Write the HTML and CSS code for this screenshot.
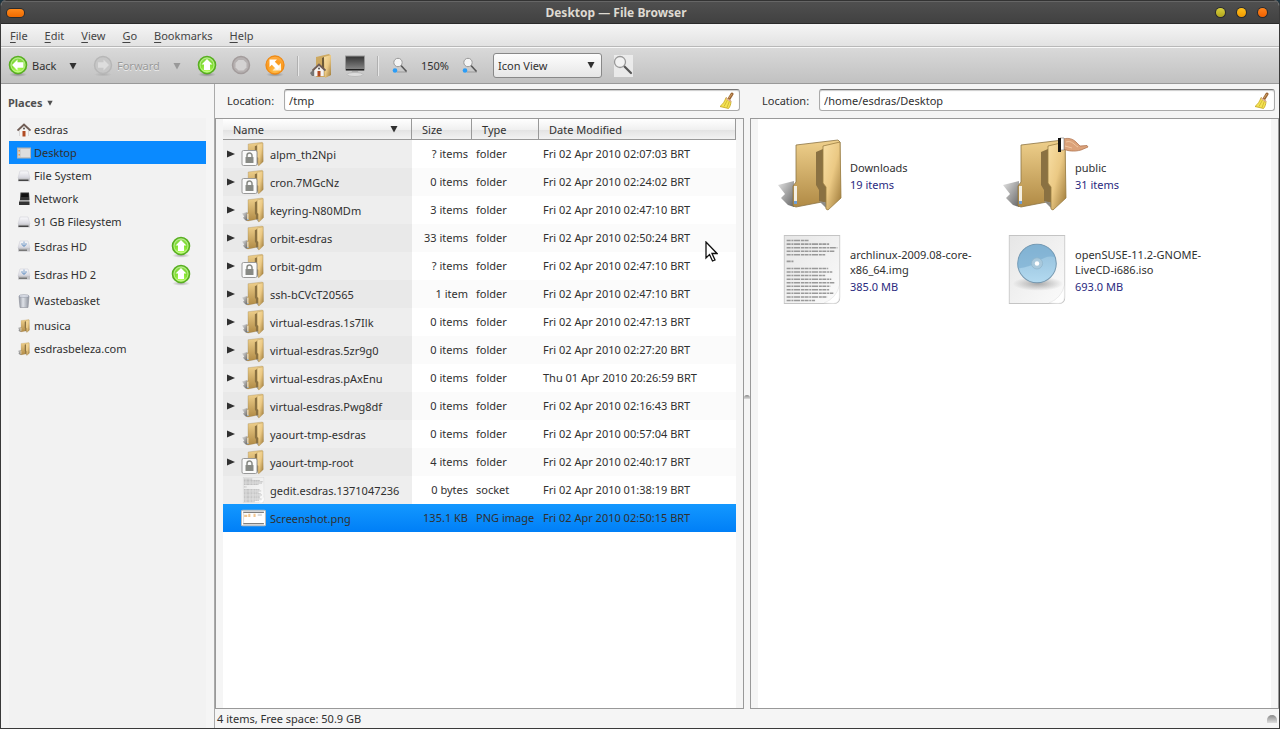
FILE: index.html
```html
<!DOCTYPE html>
<html lang="en">
<head>
<meta charset="utf-8">
<title>Desktop — File Browser</title>
<link rel="stylesheet" href="styles.css">
</head>
<body>
<svg class="sprites" aria-hidden="true">
  <defs>
    <linearGradient id="g-back" x1="0" y1="0" x2="0" y2="1"><stop offset="0" stop-color="#efd08c"/><stop offset="1" stop-color="#b08a45"/></linearGradient>
    <linearGradient id="g-flap" x1="0" y1="0" x2="1" y2="1"><stop offset="0" stop-color="#f9e0a6"/><stop offset=".5" stop-color="#ebc984"/><stop offset="1" stop-color="#9a7636"/></linearGradient>
    <linearGradient id="g-shade" x1="0" y1="0" x2="1" y2="1"><stop offset="0" stop-color="#e4e4e4"/><stop offset="1" stop-color="#666"/></linearGradient>
    <radialGradient id="g-green" cx=".5" cy=".85" r=".8"><stop offset="0" stop-color="#b4ff5c"/><stop offset=".6" stop-color="#7ddc2c"/><stop offset="1" stop-color="#8fd95a"/></radialGradient>
    <radialGradient id="g-orange" cx=".5" cy=".8" r=".8"><stop offset="0" stop-color="#ffc04d"/><stop offset=".6" stop-color="#fb9a1e"/><stop offset="1" stop-color="#ffb04a"/></radialGradient>
    <linearGradient id="g-page" x1="0" y1="0" x2="1" y2="1"><stop offset="0" stop-color="#e6e6e6"/><stop offset="1" stop-color="#fbfbfb"/></linearGradient>
    <linearGradient id="g-disc" x1="0" y1="0" x2="0" y2="1"><stop offset="0" stop-color="#8fbbd8"/><stop offset="1" stop-color="#b3daf0"/></linearGradient>
    <linearGradient id="g-screen" x1="0" y1="0" x2="0" y2="1"><stop offset="0" stop-color="#333"/><stop offset="1" stop-color="#8a8a8a"/></linearGradient>
    <linearGradient id="g-drive" x1="0" y1="0" x2="0" y2="1"><stop offset="0" stop-color="#fafafc"/><stop offset="1" stop-color="#d5d5dd"/></linearGradient>
    <linearGradient id="g-can" x1="0" y1="0" x2="1" y2="0"><stop offset="0" stop-color="#8d929c"/><stop offset=".4" stop-color="#dfe2e8"/><stop offset="1" stop-color="#8d929c"/></linearGradient>
    <radialGradient id="g-soft"><stop offset="0" stop-color="#000" stop-opacity=".3"/><stop offset="1" stop-color="#000" stop-opacity="0"/></radialGradient>
  </defs>
  <symbol id="folder" viewBox="0 0 72 76">
    <path fill="url(#g-shade)" d="M2 48 18 44V70L12 68 5 61 9 57Z"/>
    <path fill="url(#g-back)" stroke="#8b7344" stroke-width=".8" d="M20 8 62 3 64 5V60L51 64 20 70 17 69V49L20 45Z"/>
    <path fill="#8a7142" d="M40 15 47 12V46L50 50V66L43 64V53L40 48Z"/>
    <path fill="#8c8b88" d="M43 64 52 66V73Z"/>
    <path fill="url(#g-flap)" stroke="#9b7d42" stroke-width=".8" d="M47 9 64 5 65 61 52 73 50 72V50L47 46Z"/>
    <path fill="#f4efe2" d="M18 49h3v18h-3z"/><path fill="#6e9fd8" d="M18 64h3v3h-3z"/>
  </symbol>
  <symbol id="hand" viewBox="0 0 32 17">
    <path fill="#dba27a" stroke="#a96a44" stroke-width=".7" d="M6 2C12 .5 16 2 19 5L23 9 30 8.500 31 10 24 13C17 15 11 14 6 12Z"/>
    <path fill="none" stroke="#f0c6a0" d="M9 5C15 3 17 8 21 10M8 9 15 11"/>
    <path fill="#fff" stroke="#777" stroke-width=".6" d="M3 1h4v12H3z"/><path fill="#111" d="M1 1h3v14H1z"/>
  </symbol>
  <symbol id="folder-locked" viewBox="0 0 24 26">
    <use href="#folder" x="0" y="0" width="24" height="26"/>
    <rect x=".5" y="9.500" width="15" height="15" rx="1.500" fill="#fafafa" stroke="#999"/>
    <rect x="4" y="16" width="8" height="6" rx=".5" fill="#888a85"/>
    <path fill="none" stroke="#888a85" stroke-width="1.500" d="M5.500 16v-1.500a2.500 2.500 0 0 1 5 0v1.500"/>
  </symbol>
  <symbol id="page" viewBox="0 0 56 68">
    <path fill="url(#g-page)" stroke="#c4c4c4" d="M.5.500h55V61q0 6-6 6.500H.500Z"/>
    <path fill="#fff" stroke="#ddd" stroke-width=".5" d="M40 67Q52 62 55 50v11q0 6-6 6.500Z"/>
  </symbol>
  <symbol id="text-doc" viewBox="0 0 56 68">
    <use href="#page" width="56" height="68"/>
    <g stroke="#999" stroke-width="1.500" fill="none" stroke-dasharray="4 .7 2 .6 6 .8 3 .5">
      <path d="M3 5.500h22"/><path d="M3 9h42"/><path d="M3 12.500h50"/><path d="M3 16h47"/><path d="M3 19.500h38"/><path d="M3 26h7"/><path d="M3 33h41"/><path d="M3 36.500h45"/><path d="M3 40h38"/><path d="M3 43.500h44"/><path d="M3 47h47"/><path d="M3 50.500h43"/><path d="M3 54h42"/><path d="M3 57.500h46"/><path d="M3 61h40"/><path d="M3 64.500h28"/>
    </g>
  </symbol>
  <symbol id="disc-doc" viewBox="0 0 56 68">
    <use href="#page" width="56" height="68"/>
    <ellipse cx="29" cy="48" rx="25" ry="7" fill="url(#g-soft)"/>
    <circle cx="28" cy="28" r="19" fill="url(#g-disc)" stroke="#7598b0"/>
    <path fill="#75a9cd" d="M9 33Q22 31 28 27 38 19 46 22A19 19 0 0 0 11 20Q8 26 9 33Z" opacity=".55"/>
    <circle cx="28" cy="28" r="5.500" fill="#a9c9dc" stroke="#8fb4cb" stroke-width=".7"/><circle cx="28" cy="28" r="2.200" fill="#fff"/>
  </symbol>
  <symbol id="ring-green" viewBox="0 0 20 22">
    <ellipse cx="10" cy="19.500" rx="9" ry="2.300" fill="url(#g-soft)"/>
    <circle cx="10" cy="10" r="8.500" fill="url(#g-green)" stroke="#58ae22" stroke-width="1.600"/>
    <circle cx="10" cy="10" r="7" fill="none" stroke="#d5f8b0" stroke-width=".7"/>
  </symbol>
  <symbol id="up" viewBox="0 0 20 22"><use href="#ring-green" width="20" height="22"/><path fill="#fff" d="M10 4 15.500 9.500H13V15H7V9.500H4.500Z"/></symbol>
  <symbol id="back" viewBox="0 0 20 22"><use href="#ring-green" width="20" height="22"/><path fill="#fff" d="M4 10 9.500 4.500V7.200H15.500V12.800H9.500V15.500Z"/></symbol>
  <symbol id="forward" viewBox="0 0 20 22"><ellipse cx="10" cy="19.500" rx="9" ry="2" fill="url(#g-soft)" opacity=".4"/><circle cx="10" cy="10" r="8.500" fill="#c7c7c7" stroke="#b7b7b7" stroke-width="1.500"/><path fill="#ddd" d="M16 10 10.500 4.500V7.200H5V12.800H10.500V15.500Z"/></symbol>
  <symbol id="stop" viewBox="0 0 20 22"><circle cx="10" cy="10" r="8.500" fill="#b6b1b1" stroke="#a39c9c" stroke-width="1.500"/><path fill="#d4d2d2" d="m7.500 5h5L15.500 8v4.500L12.500 15.500h-5L4.500 12.500V8Z"/></symbol>
  <symbol id="reload" viewBox="0 0 20 22"><ellipse cx="10" cy="19.500" rx="9" ry="2.300" fill="url(#g-soft)"/><circle cx="10" cy="10" r="9" fill="url(#g-orange)" stroke="#ef8b16" stroke-width="1.300"/><path fill="#fff0d4" d="M16 8v7.500H7.500L10 13 13.500 10.500Z"/><path fill="#fff" d="M4.500 4.500H12L9.800 6.800 15 12 12 15 6.800 9.800 4.500 12Z"/></symbol>
  <symbol id="house" viewBox="0 0 14 14"><path fill="#bbb" d="M2 7 7 2l5 5v6H2Z"/><path fill="#f7f4f1" d="M2.500 7 7 3l4.500 4v6H2.500Z"/><path fill="none" stroke="#705d55" stroke-width="1.800" d="M.5 7.500 7 1.500l6.500 6"/><path fill="#b14b23" d="M5.500 8h3v5.500h-3z"/><circle cx="7" cy="5.500" r="1" fill="#555"/></symbol>
  <symbol id="home-folder" viewBox="0 0 22 24"><path fill="#cda961" d="M6 3 19 0l2 2v19l-6 2H6Z"/><path fill="url(#g-flap)" d="M14 3 21 1v20l-6 3Z"/><path fill="#6d5a38" d="m12 4 2-1v14h-2z"/><path fill="#777" d="m0 19 5-5v8H2z"/><use href="#house" x="2" y="9" width="14" height="14"/></symbol>
  <symbol id="computer" viewBox="0 0 22 24"><rect x="1.500" y="2" width="19" height="14" fill="url(#g-screen)" stroke="#999"/><path fill="#222" d="M2 15h18v1.500H2z"/><path fill="#aaa" d="M8 17h6l1 3H7z"/><ellipse cx="11" cy="20.500" rx="8" ry="2" fill="#ddd" stroke="#bbb"/></symbol>
  <symbol id="glass" viewBox="0 0 22 24"><path fill="#f1f1f1" d="M2 1h19v22H2z" opacity=".8"/><path stroke="#555" stroke-width="2.200" stroke-linecap="round" d="m12 12 7 7"/><circle cx="8" cy="8" r="5.500" fill="#f2f2f2" stroke="#999" stroke-width="1.300"/></symbol>
  <symbol id="zoom-glass" viewBox="0 0 16 16"><path stroke="#999" d="M5 14.500h10"/><path stroke="#555" stroke-width="1.600" d="m9 8 5.500 6"/><circle cx="6" cy="5" r="4.200" fill="#f4f4f4" stroke="#999"/><circle cx="3" cy="13" r="2.300" fill="#2b9cf5"/></symbol>
  <symbol id="broom" viewBox="0 0 16 17"><path stroke="#9b6634" stroke-width="3" stroke-linecap="round" d="m13 2-3 5"/><path stroke="#d3a56c" d="m13 2-3 4"/><path fill="#f4e353" stroke="#c4a51b" stroke-width=".8" d="M7 5.500 12 9C12 12 11 15 9.500 16.500L1 14.500C4 12 6 9 7 5.500Z"/><path stroke="#bda020" stroke-width=".6" d="M8.500 8 5 14.500M10.500 9 8 15.500"/><path stroke="#dba9a0" stroke-width="1.500" d="m7 6 5 3.500"/></symbol>
  <symbol id="desk" viewBox="0 0 14 14"><rect x=".5" y="2" width="13" height="10" fill="#cfcfcf" stroke="#b3b3b3"/><path fill="#eb9e49" d="M1.500 4H3v1.500H1.500zM1.500 8H3v1.500H1.500z"/><path fill="#dedede" d="M4 3h9v8H4z"/></symbol>
  <symbol id="drive" viewBox="0 0 14 14"><path fill="url(#g-drive)" stroke="#d0d0d6" stroke-width=".6" d="M3 2h8l2 7H1Z"/><path fill="#c9c9cd" d="M1 9h12v3.500H1z"/><path fill="#444" d="M1.500 10.500h10V12h-10z"/></symbol>
  <symbol id="usb" viewBox="0 0 14 14"><path fill="url(#g-drive)" stroke="#cfcfd6" stroke-width=".6" d="M3 2h8l2 7H1Z"/><path fill="#c2c2c6" d="M1 9h12v3.500H1z"/><path fill="#777" d="M2 10.500h8V12H2z"/><path fill="none" stroke="#6b95c5" stroke-width=".8" d="M7 2.500V8M5 4v2l2 1 2-1V4"/></symbol>
  <symbol id="network" viewBox="0 0 14 14"><path fill="#333" d="M3.500.500H12L12.500 8H3z"/><path fill="#111" d="M4.500 1.500H11L11.500 5H4z"/><path fill="#aaa" d="M2.500 8h10L12 9.500H2.500z"/><path fill="#333" d="M2 9.500h10.500V13H2z"/></symbol>
  <symbol id="waste" viewBox="0 0 14 14"><path fill="url(#g-can)" stroke="#8b8f99" stroke-width=".6" d="M2 2h10l-1 11.500H3z"/><ellipse cx="7" cy="2" rx="5" ry="1.300" fill="#e3e6ee" stroke="#8990a0" stroke-width=".6"/></symbol>
  <symbol id="thumb" viewBox="0 0 24 16"><rect x=".5" y=".5" width="23" height="15" rx="1" fill="#fff" stroke="#bbb"/><path fill="#555" d="M2 2h20v1H2zM2 13h20v1H2z"/><path fill="#f2c690" d="M3 5h3v2H3zM7 4h2v3H7zM12 4h2v3h-2z"/><path fill="#ddd" d="M2 3h1v10H2zM16 4h4v2h-4z"/></symbol>
  <symbol id="down-arrow" viewBox="0 0 8 8"><path fill="currentColor" d="M.5 1h7L4 7.500Z"/></symbol>
  <symbol id="right-arrow" viewBox="0 0 8 8"><path fill="currentColor" d="M0 .5 8 4 0 7.500Z"/></symbol>
</svg>

<div class="window">
  <header class="titlebar">
    <button class="pill" aria-label="Window menu"></button>
    <h1>Desktop — File Browser</h1>
    <div class="controls">
      <button class="dot olive" aria-label="Minimize"></button>
      <button class="dot amber" aria-label="Maximize"></button>
      <button class="dot orange" aria-label="Close"></button>
    </div>
  </header>

  <nav class="menubar">
    <button><u>F</u>ile</button><button><u>E</u>dit</button><button><u>V</u>iew</button><button><u>G</u>o</button><button><u>B</u>ookmarks</button><button><u>H</u>elp</button>
  </nav>

  <div class="toolbar">
    <button class="nav-back"><svg class="i20"><use href="#back"/></svg>Back</button>
    <button class="drop" aria-label="Back history"><svg class="i8"><use href="#down-arrow"/></svg></button>
    <button class="nav-forward" disabled><svg class="i20"><use href="#forward"/></svg>Forward</button>
    <button class="drop off" aria-label="Forward history" disabled><svg class="i8"><use href="#down-arrow"/></svg></button>
    <button class="tool lead" aria-label="Up"><svg class="i20"><use href="#up"/></svg></button>
    <button class="tool" aria-label="Stop" disabled><svg class="i20"><use href="#stop"/></svg></button>
    <button class="tool" aria-label="Reload"><svg class="i20"><use href="#reload"/></svg></button>
    <span class="sep"></span>
    <button class="tool" aria-label="Home"><svg class="i24"><use href="#home-folder"/></svg></button>
    <button class="tool" aria-label="Computer"><svg class="i24"><use href="#computer"/></svg></button>
    <span class="sep"></span>
    <button class="zoom" aria-label="Zoom out"><svg class="i16"><use href="#zoom-glass"/></svg></button>
    <span class="level">150%</span>
    <button class="zoom" aria-label="Zoom in"><svg class="i16"><use href="#zoom-glass"/></svg></button>
    <div class="view"><select aria-label="View"><option>Icon View</option><option>List View</option></select><svg class="i8"><use href="#down-arrow"/></svg></div>
    <button class="tool search" aria-label="Search"><svg class="i24"><use href="#glass"/></svg></button>
  </div>

  <div class="body">
    <aside class="sidebar">
      <button class="places">Places <svg class="i6"><use href="#down-arrow"/></svg></button>
      <ul>
        <li><a href="#"><svg class="i14"><use href="#house"/></svg>esdras</a></li>
        <li class="current"><a href="#"><svg class="i14"><use href="#desk"/></svg>Desktop</a></li>
        <li><a href="#"><svg class="i14"><use href="#drive"/></svg>File System</a></li>
        <li><a href="#"><svg class="i14"><use href="#network"/></svg>Network</a></li>
        <li><a href="#"><svg class="i14"><use href="#drive"/></svg>91 GB Filesystem</a></li>
        <li class="mount"><a href="#"><svg class="i14"><use href="#usb"/></svg>Esdras HD</a><button aria-label="Eject Esdras HD"><svg class="i20"><use href="#up"/></svg></button></li>
        <li class="mount"><a href="#"><svg class="i14"><use href="#usb"/></svg>Esdras HD 2</a><button aria-label="Eject Esdras HD 2"><svg class="i20"><use href="#up"/></svg></button></li>
        <li class="trash"><a href="#"><svg class="i14"><use href="#waste"/></svg>Wastebasket</a></li>
        <li><a href="#"><svg class="i14"><use href="#folder"/></svg>musica</a></li>
        <li><a href="#"><svg class="i14"><use href="#folder"/></svg>esdrasbeleza.com</a></li>
      </ul>
    </aside>

    <div class="content">
      <main class="panes">
        <section class="pane">
          <div class="location"><label for="loc1">Location:</label><div class="field"><input id="loc1" type="text" value="/tmp"><button aria-label="Clear location"><svg class="i16"><use href="#broom"/></svg></button></div></div>
          <div class="frame">
            <div class="view-area">
              <table>
                <colgroup><col class="c-name"><col class="c-size"><col class="c-type"><col></colgroup>
                <thead><tr><th><button>Name<svg class="i8"><use href="#down-arrow"/></svg></button></th><th><button>Size</button></th><th><button>Type</button></th><th><button>Date Modified</button></th></tr></thead>
                <tbody>
                  <tr><td><div class="name"><button aria-label="Expand"><svg class="i8"><use href="#right-arrow"/></svg></button><svg class="file"><use href="#folder-locked"/></svg>alpm_th2Npi</div></td><td>? items</td><td>folder</td><td>Fri 02 Apr 2010 02:07:03 BRT</td></tr>
                  <tr><td><div class="name"><button aria-label="Expand"><svg class="i8"><use href="#right-arrow"/></svg></button><svg class="file"><use href="#folder-locked"/></svg>cron.7MGcNz</div></td><td>0 items</td><td>folder</td><td>Fri 02 Apr 2010 02:24:02 BRT</td></tr>
                  <tr><td><div class="name"><button aria-label="Expand"><svg class="i8"><use href="#right-arrow"/></svg></button><svg class="file"><use href="#folder"/></svg>keyring-N80MDm</div></td><td>3 items</td><td>folder</td><td>Fri 02 Apr 2010 02:47:10 BRT</td></tr>
                  <tr><td><div class="name"><button aria-label="Expand"><svg class="i8"><use href="#right-arrow"/></svg></button><svg class="file"><use href="#folder"/></svg>orbit-esdras</div></td><td>33 items</td><td>folder</td><td>Fri 02 Apr 2010 02:50:24 BRT</td></tr>
                  <tr><td><div class="name"><button aria-label="Expand"><svg class="i8"><use href="#right-arrow"/></svg></button><svg class="file"><use href="#folder-locked"/></svg>orbit-gdm</div></td><td>? items</td><td>folder</td><td>Fri 02 Apr 2010 02:47:10 BRT</td></tr>
                  <tr><td><div class="name"><button aria-label="Expand"><svg class="i8"><use href="#right-arrow"/></svg></button><svg class="file"><use href="#folder"/></svg>ssh-bCVcT20565</div></td><td>1 item</td><td>folder</td><td>Fri 02 Apr 2010 02:47:10 BRT</td></tr>
                  <tr><td><div class="name"><button aria-label="Expand"><svg class="i8"><use href="#right-arrow"/></svg></button><svg class="file"><use href="#folder"/></svg>virtual-esdras.1s7Ilk</div></td><td>0 items</td><td>folder</td><td>Fri 02 Apr 2010 02:47:13 BRT</td></tr>
                  <tr><td><div class="name"><button aria-label="Expand"><svg class="i8"><use href="#right-arrow"/></svg></button><svg class="file"><use href="#folder"/></svg>virtual-esdras.5zr9g0</div></td><td>0 items</td><td>folder</td><td>Fri 02 Apr 2010 02:27:20 BRT</td></tr>
                  <tr><td><div class="name"><button aria-label="Expand"><svg class="i8"><use href="#right-arrow"/></svg></button><svg class="file"><use href="#folder"/></svg>virtual-esdras.pAxEnu</div></td><td>0 items</td><td>folder</td><td>Thu 01 Apr 2010 20:26:59 BRT</td></tr>
                  <tr><td><div class="name"><button aria-label="Expand"><svg class="i8"><use href="#right-arrow"/></svg></button><svg class="file"><use href="#folder"/></svg>virtual-esdras.Pwg8df</div></td><td>0 items</td><td>folder</td><td>Fri 02 Apr 2010 02:16:43 BRT</td></tr>
                  <tr><td><div class="name"><button aria-label="Expand"><svg class="i8"><use href="#right-arrow"/></svg></button><svg class="file"><use href="#folder"/></svg>yaourt-tmp-esdras</div></td><td>0 items</td><td>folder</td><td>Fri 02 Apr 2010 00:57:04 BRT</td></tr>
                  <tr><td><div class="name"><button aria-label="Expand"><svg class="i8"><use href="#right-arrow"/></svg></button><svg class="file"><use href="#folder-locked"/></svg>yaourt-tmp-root</div></td><td>4 items</td><td>folder</td><td>Fri 02 Apr 2010 02:40:17 BRT</td></tr>
                  <tr><td><div class="name leaf"><svg class="file"><use href="#text-doc"/></svg>gedit.esdras.1371047236</div></td><td>0 bytes</td><td>socket</td><td>Fri 02 Apr 2010 01:38:19 BRT</td></tr>
                  <tr class="selected"><td><div class="name leaf"><svg class="file"><use href="#thumb"/></svg>Screenshot.png</div></td><td>135.1 KB</td><td>PNG image</td><td>Fri 02 Apr 2010 02:50:15 BRT</td></tr>
                </tbody>
              </table>
            </div>
          </div>
        </section>
        <div class="splitter"><span></span></div>
        <section class="pane">
          <div class="location"><label for="loc2">Location:</label><div class="field"><input id="loc2" type="text" value="/home/esdras/Desktop"><button aria-label="Clear location"><svg class="i16"><use href="#broom"/></svg></button></div></div>
          <div class="frame">
            <div class="view-area icons">
              <a href="#" class="item"><svg class="big"><use href="#folder"/></svg><span>Downloads<em>19 items</em></span></a>
              <a href="#" class="item"><svg class="big"><use href="#folder"/></svg><svg class="emblem"><use href="#hand"/></svg><span>public<em>31 items</em></span></a>
              <a href="#" class="item"><svg class="big doc"><use href="#text-doc"/></svg><span>archlinux-2009.08-core-<br>x86_64.img<em>385.0 MB</em></span></a>
              <a href="#" class="item"><svg class="big doc"><use href="#disc-doc"/></svg><span>openSUSE-11.2-GNOME-<br>LiveCD-i686.iso<em>693.0 MB</em></span></a>
            </div>
          </div>
        </section>
      </main>
      <footer class="status"><span>4 items, Free space: 50.9 GB</span><i class="grip"></i></footer>
    </div>
  </div>
  <svg class="pointer" viewBox="0 0 13 21"><path fill="#fff" stroke="#111" stroke-width="1.300" d="M1 1v16l3.500-3.500 3 6.500 2.500-1-3-6.500H12Z"/></svg>
</div>
</body>
</html>
```

FILE: styles.css
```css
* { box-sizing: border-box; }
body { margin: 0; background: #1d3440; color: #303030; font: 11px/15px "Noto Sans", "Open Sans", sans-serif; }
button, input, select { font: inherit; color: inherit; }
button { background: none; border: 0; padding: 0; display: flex; align-items: center; justify-content: center; flex: none; }
a { color: inherit; text-decoration: none; }
svg { display: block; flex: none; }
.sprites { position: absolute; width: 0; height: 0; }
.i6 { width: 6px; height: 6px; }
.i8 { width: 8px; height: 8px; }
.i14 { width: 14px; height: 14px; }
.i16 { width: 16px; height: 17px; }
.i20 { width: 20px; height: 22px; }
.i24 { width: 22px; height: 24px; }

.window { position: relative; height: 100vh; display: flex; flex-direction: column; background: #f5f5f5; border: 1px solid #3a3a3a; border-top: 0; border-radius: 6px 6px 0 0; overflow: hidden; }

.titlebar { height: 24px; flex: none; display: flex; align-items: center; padding: 1px 12px 0 6px; background: linear-gradient(#505050, #414141); border-top: 1px solid #333; border-bottom: 1px solid #2a2a2a; box-shadow: inset 0 1px #666; }
.titlebar h1 { flex: 1; margin: 0; text-align: center; font-size: 12px; font-weight: 700; color: #dedad2; }
.pill { width: 17px; height: 8px; border-radius: 4px; background: linear-gradient(#ff8a1c, #f06a00); box-shadow: 0 0 0 1px #2c2c2c; }
.controls { display: flex; gap: 12px; padding-left: 8px; }
.dot { width: 9px; height: 9px; border-radius: 50%; box-shadow: 0 0 0 1px #2c2c2c; }
.olive { background: linear-gradient(#d8cf3d, #b0a51d); }
.amber { background: linear-gradient(#ffc01c, #f09a00); }
.orange { background: linear-gradient(#ff841c, #f06000); }

.menubar { height: 23px; flex: none; display: flex; gap: 17px; padding: 1px 9px 0; background: linear-gradient(#f5f5f5, #e2e2e2); border-bottom: 1px solid #b8b8b8; color: #444; }
.menubar u { text-underline-offset: 2px; }

.toolbar { height: 37px; flex: none; display: flex; align-items: center; padding: 0 7px; background: linear-gradient(#d9d9d9, #c1c1c1); border-top: 1px solid #f8f8f8; border-bottom: 1px solid #999; }
.toolbar button { height: 30px; }
.nav-back, .nav-forward { gap: 4px; }
.toolbar .nav-back, .toolbar .nav-forward { justify-content: flex-start; }
.nav-back { width: 56px; }
.nav-forward { width: 75px; margin-left: 11px; color: #999; text-shadow: 0 1px #eee; }
.drop { width: 18px; }
.off { color: #999; }
.tool { width: 34px; }
.lead { margin-left: 4px; }
.sep { width: 12px; height: 20px; background: linear-gradient(90deg, transparent 5px, #b0b0b0 5px, #b0b0b0 6px, #e8e8e8 6px, #e8e8e8 7px, transparent 7px); }
.zoom { width: 32px; }
.level { width: 38px; text-align: center; }
.view { position: relative; width: 109px; height: 25px; margin-left: 7px; }
.view select { appearance: none; width: 100%; height: 100%; padding: 0 20px 0 4px; border: 1px solid #888; border-radius: 3px; background: linear-gradient(#fdfdfd, #e6e6e6); }
.view svg { position: absolute; right: 7px; top: 8px; pointer-events: none; }
.search { margin-left: 4px; }

.body { flex: 1; min-height: 0; display: flex; }
.sidebar { width: 214px; flex: none; padding: 0 8px 0 7px; border-right: 1px solid #aaa; display: flex; flex-direction: column; }
.places { height: 34px; gap: 5px; padding-top: 3px; align-self: flex-start; font-weight: 700; color: #505050; }
.sidebar ul { flex: 1; margin: 0 0 0 1px; padding: 0; list-style: none; background: #f2f2f2; }
.sidebar li { display: flex; align-items: center; justify-content: space-between; height: 23px; padding: 0 15px 0 8px; }
.sidebar li a { display: flex; align-items: center; gap: 3px; }
.sidebar .current { background: #0a8aff; }
.sidebar .mount { height: 28px; }
.sidebar .mount a, .sidebar .trash a { padding-bottom: 2px; }
.sidebar .trash { height: 25px; }

.content { flex: 1; min-width: 0; display: flex; flex-direction: column; }
.panes { flex: 1; min-height: 0; display: grid; grid-template-columns: minmax(0, 1fr) 6px minmax(0, 1fr); }
.pane { display: flex; flex-direction: column; min-height: 0; }
.location { height: 34px; flex: none; display: flex; align-items: center; gap: 10px; padding: 0 4px 2px 12px; }
.field { flex: 1; height: 22px; display: flex; align-items: center; padding: 0 4px; background: #fff; border: 1px solid #aaa; border-top-color: #777; border-radius: 3px; box-shadow: inset 0 1px 1px #ccc; }
.field input { flex: 1; min-width: 0; border: 0; padding: 0; background: none; outline: 0; }
.frame { flex: 1; min-height: 0; padding: 0 7px; border: 1px solid #999; }
.view-area { height: 100%; background: #fff; }
.splitter { display: flex; align-items: center; justify-content: center; }
.splitter span { width: 6px; height: 4px; border-radius: 3px 3px 0 0; background: linear-gradient(#888, #ddd); }

table { width: 100%; table-layout: fixed; border-collapse: collapse; }
.c-name { width: 189px; }
.c-size { width: 60px; }
.c-type { width: 67px; }
th { height: 21px; padding: 0; font-weight: 400; background: linear-gradient(90deg, transparent calc(100% - 1px), #999 0), linear-gradient(#fff, #f0f0f0 50%, #e2e2e2 50%, #f4f4f4); box-shadow: inset 0 -1px #999; }
th button { width: 100%; height: 20px; padding: 0 14px 1px 10px; justify-content: space-between; }
td { height: 28px; padding: 0 4px 2px; white-space: nowrap; }
td:first-child { padding: 0 0 0 2px; background: #eee; }
td:nth-child(2) { text-align: right; }
tbody tr:nth-child(even) { background: #fbfbfb; }
tbody tr:nth-child(even) td:first-child { background: #e9e9e9; }
tbody tr.selected { background: linear-gradient(#1398ff, #007ff7); }
tbody tr.selected td:first-child { background: none; }
.name { display: flex; align-items: center; gap: 4px; height: 26px; }
.name button { width: 12px; height: 24px; }
.leaf { padding-left: 16px; }
.file { width: 25px; height: 26px; }

.icons { display: grid; grid-template-columns: repeat(auto-fill, 225px); grid-auto-rows: 94px; align-content: start; padding: 9px 0 0 18px; }
.item { position: relative; display: flex; align-items: center; gap: 2px; }
.item span { flex: 1; padding-top: 2px; }
.item em { display: block; margin-top: 2px; font-style: normal; color: #2a2a80; }
.big { width: 72px; height: 76px; }
.doc { height: 69px; }
.emblem { position: absolute; left: 56px; top: 9px; width: 32px; height: 17px; }

.status { height: 19px; flex: none; display: flex; align-items: center; justify-content: space-between; padding: 0 2px; }
.grip { width: 10px; height: 8px; border-radius: 5px 5px 0 0; background: linear-gradient(#888, #ddd); }
.pointer { position: absolute; left: 704px; top: 241px; width: 13px; height: 21px; }
```
